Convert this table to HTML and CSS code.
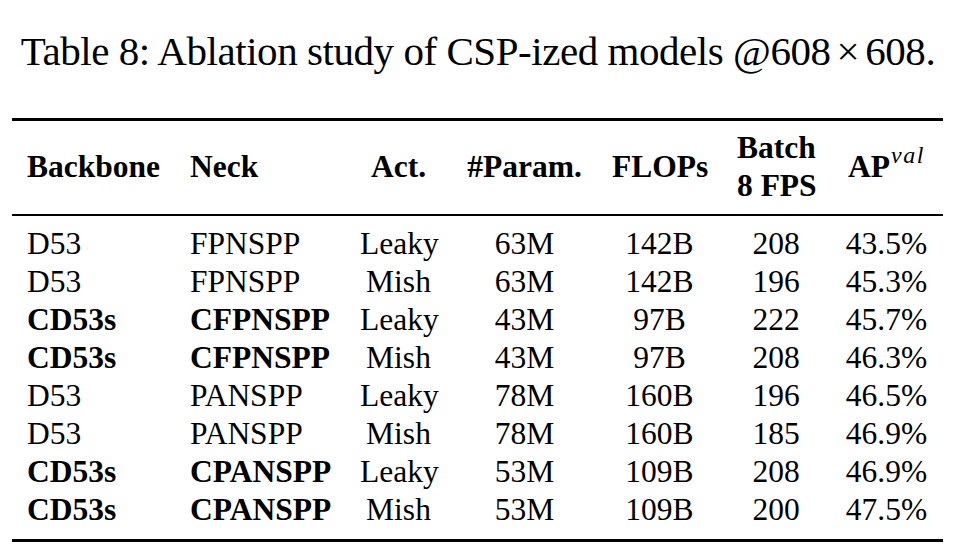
FILE: index.html
```html
<!DOCTYPE html>
<html>
<head>
<meta charset="utf-8">
<link rel="stylesheet" href="styles.css">
</head>
<body>
<div class="page">
  <div class="caption">Table 8: Ablation study of CSP-ized models @608<span class="times">×</span>608.</div>
  <table class="tbl">
    <colgroup>
      <col class="c1"><col class="c2"><col class="c3"><col class="c4"><col class="c5"><col class="c6"><col class="c7">
    </colgroup>
    <thead>
      <tr>
        <th class="l">Backbone</th>
        <th class="l">Neck</th>
        <th>Act.</th>
        <th>#Param.</th>
        <th>FLOPs</th>
        <th><div>Batch</div><div>8 FPS</div></th>
        <th class="ap">AP<span class="sup">val</span></th>
      </tr>
    </thead>
    <tbody>
      <tr class="first"><td class="l">D53</td><td class="l">FPNSPP</td><td>Leaky</td><td>63M</td><td>142B</td><td>208</td><td>43.5%</td></tr>
      <tr><td class="l">D53</td><td class="l">FPNSPP</td><td>Mish</td><td>63M</td><td>142B</td><td>196</td><td>45.3%</td></tr>
      <tr><td class="l b">CD53s</td><td class="l b">CFPNSPP</td><td>Leaky</td><td>43M</td><td>97B</td><td>222</td><td>45.7%</td></tr>
      <tr><td class="l b">CD53s</td><td class="l b">CFPNSPP</td><td>Mish</td><td>43M</td><td>97B</td><td>208</td><td>46.3%</td></tr>
      <tr><td class="l">D53</td><td class="l">PANSPP</td><td>Leaky</td><td>78M</td><td>160B</td><td>196</td><td>46.5%</td></tr>
      <tr><td class="l">D53</td><td class="l">PANSPP</td><td>Mish</td><td>78M</td><td>160B</td><td>185</td><td>46.9%</td></tr>
      <tr><td class="l b">CD53s</td><td class="l b">CPANSPP</td><td>Leaky</td><td>53M</td><td>109B</td><td>208</td><td>46.9%</td></tr>
      <tr class="last"><td class="l b">CD53s</td><td class="l b">CPANSPP</td><td>Mish</td><td>53M</td><td>109B</td><td>200</td><td>47.5%</td></tr>
    </tbody>
  </table>
</div>
</body>
</html>
```

FILE: styles.css
```css
html, body {
  margin: 0;
  padding: 0;
  background: #ffffff;
  color: #000000;
}
.page {
  width: 954px;
  height: 555px;
  overflow: hidden;
  font-family: "Liberation Serif", "Times New Roman", serif;
}
.caption {
  font-size: 41px;
  line-height: 45px;
  letter-spacing: -0.45px;
  padding-top: 29px;
  padding-left: 2px;
  text-align: center;
  white-space: nowrap;
}
.times {
  margin: 0 6px;
}
.tbl {
  margin: 44px 0 0 12px;
  width: 931px;
  table-layout: fixed;
  border-collapse: collapse;
  border-top: 3px solid #000;
  border-bottom: 3px solid #000;
  font-size: 31.5px;
  line-height: 38px;
}
.c1 { width: 163px; }
.c2 { width: 170px; }
.c3 { width: 107px; }
.c4 { width: 145px; }
.c5 { width: 125px; }
.c6 { width: 108px; }
.c7 { width: 113px; }
.tbl th, .tbl td {
  padding: 0 15px;
  text-align: center;
  white-space: nowrap;
  vertical-align: middle;
}
.tbl th.l, .tbl td.l {
  text-align: left;
}
.tbl th.ap {
  padding-left: 10px;
  padding-right: 10px;
}
.tbl thead tr {
  border-bottom: 2px solid #000;
}
.tbl th {
  font-weight: bold;
  padding-top: 8px;
  padding-bottom: 9px;
}
.tbl td.b {
  font-weight: bold;
}
.tbl tr.first td {
  padding-top: 9px;
}
.tbl tr.last td {
  padding-bottom: 10px;
}
.sup {
  font-weight: normal;
  font-style: italic;
  font-size: 24px;
  line-height: 0;
  vertical-align: 14px;
  margin-left: 1px;
  letter-spacing: 1.5px;
}
```
